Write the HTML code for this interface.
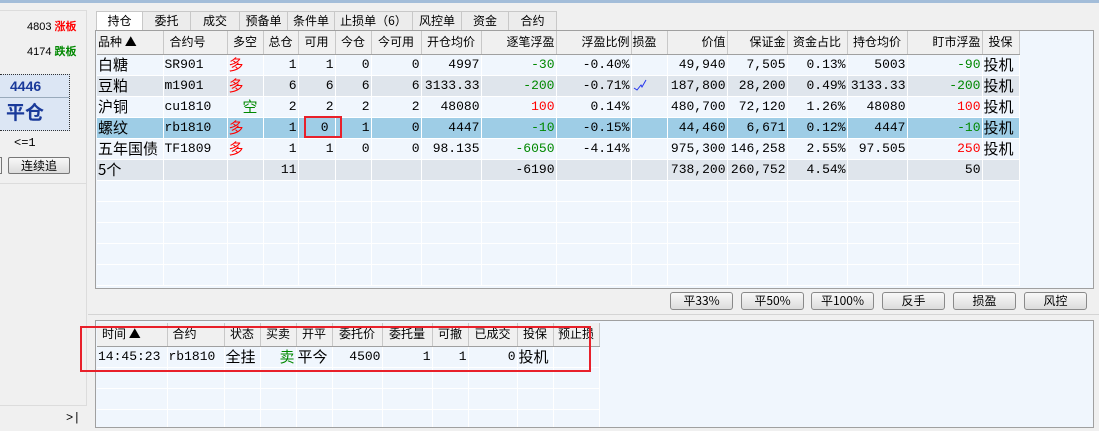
<!DOCTYPE html>
<html><head><meta charset="utf-8"><style>
*{margin:0;padding:0;box-sizing:border-box}
body{width:1099px;height:431px;background:#f0f0f0;position:relative;overflow:hidden;font-family:"Liberation Mono","Noto Sans CJK SC",monospace;color:#000}
.abs{position:absolute}
.topbar{left:0;top:0;width:1099px;height:3px;background:#a3bdd9}
.left{left:0;top:10px;width:87px;height:396px;border:1px solid #dcdcdc;border-left:none;background:#f0f0f0}
.cn{font-family:"Noto Sans CJK SC","WenQuanYi Zen Hei",sans-serif}
.tabs{left:96px;top:11px;height:19px;display:flex}
.tab{height:19px;border:1px solid #c8c8c8;border-bottom:none;border-left:none;background:#ececec;font:12px "Noto Sans CJK SC",sans-serif;line-height:18px;text-align:center}
.tab.act{background:#fff;border-left:1px solid #c8c8c8}
.box{background:#f0f6fd;border:1px solid #a0a0a0;overflow:hidden}
table{border-collapse:collapse;table-layout:fixed}
td,th{height:21px;line-height:20px;border-right:1px solid #fff;border-bottom:1px solid #fff;white-space:nowrap;overflow:hidden;padding:0 1px;font-size:13px;font-weight:normal}
tr{height:21px}
th{height:23px;line-height:22px;background:#f0f0f0;border-right:1px solid #c8c8c8;border-bottom:1px solid #a0a0a0;font:12px/22px "Noto Sans CJK SC",sans-serif;text-align:center}
tr.h{height:23px}
td.r{text-align:right}
.z{font-family:"Noto Sans CJK SC",sans-serif;font-size:15px;line-height:20px}
tr.g td{background:#dfe5ec}
tr.s td{background:#9ecde6}
.red{color:#f00}.grn{color:#080}
.btn{top:292px;width:63px;height:18px;border:1px solid #8a8a8a;border-radius:3px;background:linear-gradient(#f8f8f8,#dcdcdc);font:12px "Noto Sans CJK SC",sans-serif;text-align:center;line-height:16px}
</style></head><body>
<div class="abs topbar"></div>
<div class="abs left"></div>
<div class="abs" style="left:0;top:183px;width:87px;height:1px;background:#dcdcdc"></div>
<div class="abs" style="left:27px;top:18px;font:11px 'Liberation Sans',sans-serif">4803 <span class="cn red" style="font-weight:bold">涨板</span></div>
<div class="abs" style="left:27px;top:43px;font:11px 'Liberation Sans',sans-serif">4174 <span class="cn grn" style="font-weight:bold">跌板</span></div>
<div class="abs" style="left:0;top:74px;width:70px;height:57px;background:#dce6f4;border:1px dotted #333;border-left:none"></div>
<div class="abs" style="left:0;top:97px;width:69px;height:1px;background:#9ab"></div>
<div class="abs" style="left:10px;top:78px;font:bold 14px 'Liberation Sans',sans-serif;color:#1a3a9a">4446</div>
<div class="abs cn" style="left:6px;top:100px;font-weight:bold;font-size:19px;color:#1a3a9a;line-height:24px">平仓</div>
<div class="abs" style="left:14px;top:136px;font-size:12px">&lt;=1</div>
<div class="abs" style="left:-4px;top:157px;width:6px;height:17px;border:1px solid #777"></div>
<div class="abs" style="left:8px;top:157px;width:62px;height:17px;border:1px solid #777;border-radius:2px;background:linear-gradient(#f8f8f8,#dcdcdc);font:12px 'Noto Sans CJK SC',sans-serif;text-align:center;line-height:15px">连续追</div>
<div class="abs" style="left:66px;top:411px;font-size:12px">&gt;|</div>

<div class="abs tabs">
<div class="tab act" style="width:47px">持仓</div><div class="tab" style="width:48px">委托</div><div class="tab" style="width:49px">成交</div><div class="tab" style="width:48px">预备单</div><div class="tab" style="width:47px">条件单</div><div class="tab" style="width:78px">止损单（6）</div><div class="tab" style="width:49px">风控单</div><div class="tab" style="width:47px">资金</div><div class="tab" style="width:48px">合约</div>
</div>

<div class="abs box" style="left:95px;top:30px;width:999px;height:259px;padding-left:1px">
<table style="width:922px;margin-top:0">
<colgroup><col style="width:66px"><col style="width:64px"><col style="width:36px"><col style="width:35px"><col style="width:37px"><col style="width:36px"><col style="width:50px"><col style="width:60px"><col style="width:75px"><col style="width:75px"><col style="width:36px"><col style="width:60px"><col style="width:60px"><col style="width:60px"><col style="width:60px"><col style="width:75px"><col style="width:37px"></colgroup>
<tr class="h"><th style="text-align:left">品种 ▲</th><th style="text-align:left;padding-left:6px">合约号</th><th>多空</th><th>总仓</th><th>可用</th><th>今仓</th><th>今可用</th><th>开仓均价</th><th style="text-align:right">逐笔浮盈</th><th style="text-align:right">浮盈比例</th><th style="text-align:left">损盈</th><th style="text-align:right">价值</th><th style="text-align:right">保证金</th><th>资金占比</th><th>持仓均价</th><th style="text-align:right">盯市浮盈</th><th>投保</th></tr>
<tr><td class="z">白糖</td><td>SR901</td><td class="z red">多</td><td class="r">1</td><td class="r">1</td><td class="r">0</td><td class="r">0</td><td class="r">4997</td><td class="r grn">-30</td><td class="r">-0.40%</td><td></td><td class="r">49,940</td><td class="r">7,505</td><td class="r">0.13%</td><td class="r">5003</td><td class="r grn">-90</td><td class="z">投机</td></tr>
<tr class="g"><td class="z">豆粕</td><td>m1901</td><td class="z red">多</td><td class="r">6</td><td class="r">6</td><td class="r">6</td><td class="r">6</td><td class="r">3133.33</td><td class="r grn">-200</td><td class="r">-0.71%</td><td><svg width="14" height="12" style="vertical-align:middle"><path d="M1 9 L4 11 L8 6 L9 8 L13 1" stroke="#2233ee" fill="none"/></svg></td><td class="r">187,800</td><td class="r">28,200</td><td class="r">0.49%</td><td class="r">3133.33</td><td class="r grn">-200</td><td class="z">投机</td></tr>
<tr><td class="z">沪铜</td><td>cu1810</td><td class="z grn" style="text-align:right;padding-right:5px">空</td><td class="r">2</td><td class="r">2</td><td class="r">2</td><td class="r">2</td><td class="r">48080</td><td class="r red">100</td><td class="r">0.14%</td><td></td><td class="r">480,700</td><td class="r">72,120</td><td class="r">1.26%</td><td class="r">48080</td><td class="r red">100</td><td class="z">投机</td></tr>
<tr class="s"><td class="z">螺纹</td><td>rb1810</td><td class="z red">多</td><td class="r">1</td><td class="r" style="padding-right:6px">0</td><td class="r">1</td><td class="r">0</td><td class="r">4447</td><td class="r grn">-10</td><td class="r">-0.15%</td><td></td><td class="r">44,460</td><td class="r">6,671</td><td class="r">0.12%</td><td class="r">4447</td><td class="r grn">-10</td><td class="z">投机</td></tr>
<tr><td class="z">五年国债</td><td>TF1809</td><td class="z red">多</td><td class="r">1</td><td class="r">1</td><td class="r">0</td><td class="r">0</td><td class="r">98.135</td><td class="r grn">-6050</td><td class="r">-4.14%</td><td></td><td class="r">975,300</td><td class="r">146,258</td><td class="r">2.55%</td><td class="r">97.505</td><td class="r red">250</td><td class="z">投机</td></tr>
<tr class="g"><td class="z">5个</td><td></td><td></td><td class="r">11</td><td></td><td></td><td></td><td></td><td class="r">-6190</td><td></td><td></td><td class="r">738,200</td><td class="r">260,752</td><td class="r">4.54%</td><td></td><td class="r">50</td><td></td></tr>
<tr><td></td><td></td><td></td><td></td><td></td><td></td><td></td><td></td><td></td><td></td><td></td><td></td><td></td><td></td><td></td><td></td><td></td></tr>
<tr><td></td><td></td><td></td><td></td><td></td><td></td><td></td><td></td><td></td><td></td><td></td><td></td><td></td><td></td><td></td><td></td><td></td></tr>
<tr><td></td><td></td><td></td><td></td><td></td><td></td><td></td><td></td><td></td><td></td><td></td><td></td><td></td><td></td><td></td><td></td><td></td></tr>
<tr><td></td><td></td><td></td><td></td><td></td><td></td><td></td><td></td><td></td><td></td><td></td><td></td><td></td><td></td><td></td><td></td><td></td></tr>
<tr><td></td><td></td><td></td><td></td><td></td><td></td><td></td><td></td><td></td><td></td><td></td><td></td><td></td><td></td><td></td><td></td><td></td></tr>
</table>
</div>
<div class="abs" style="left:304px;top:116px;width:38px;height:22px;border:2px solid #e8202a"></div>

<div class="abs btn" style="left:670px">平33%</div>
<div class="abs btn" style="left:741px">平50%</div>
<div class="abs btn" style="left:811px">平100%</div>
<div class="abs btn" style="left:882px">反手</div>
<div class="abs btn" style="left:953px">损盈</div>
<div class="abs btn" style="left:1024px">风控</div>
<div class="abs" style="left:88px;top:314px;width:1011px;height:1px;background:#d4d4d4"></div>

<div class="abs box" style="left:95px;top:320px;width:999px;height:108px;padding-left:1px;padding-top:2px;background:#f0f6fd">
<table style="width:502px">
<colgroup><col style="width:70px"><col style="width:57px"><col style="width:36px"><col style="width:36px"><col style="width:36px"><col style="width:50px"><col style="width:50px"><col style="width:36px"><col style="width:49px"><col style="width:36px"><col style="width:46px"></colgroup>
<tr class="h"><th style="text-align:left;padding-left:5px">时间 ▲</th><th style="text-align:left;padding-left:5px">合约</th><th>状态</th><th>买卖</th><th>开平</th><th>委托价</th><th>委托量</th><th>可撤</th><th>已成交</th><th>投保</th><th>预止损</th></tr>
<tr><td>14:45:23</td><td>rb1810</td><td class="z">全挂</td><td class="z grn" style="text-align:right">卖</td><td class="z">平今</td><td class="r">4500</td><td class="r">1</td><td class="r">1</td><td class="r">0</td><td class="z">投机</td><td></td></tr>
<tr><td></td><td></td><td></td><td></td><td></td><td></td><td></td><td></td><td></td><td></td><td></td></tr>
<tr><td></td><td></td><td></td><td></td><td></td><td></td><td></td><td></td><td></td><td></td><td></td></tr>
<tr><td></td><td></td><td></td><td></td><td></td><td></td><td></td><td></td><td></td><td></td><td></td></tr>
</table>
</div>
<div class="abs" style="left:80px;top:326px;width:511px;height:46px;border:2px solid #e8202a"></div>
</body></html>
